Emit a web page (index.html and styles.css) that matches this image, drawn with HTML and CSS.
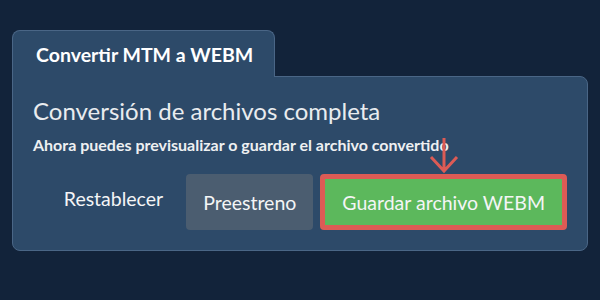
FILE: index.html
```html
<!DOCTYPE html>
<html lang="es">
<head>
    <meta charset="UTF-8">
    <meta name="viewport" content="width=device-width, initial-scale=1.0">
    <title>Convertir MTM a WEBM</title>
    <link rel="stylesheet" href="styles.css">
</head>
<body>
    <div class="converter">
        <div class="tab">Convertir MTM a WEBM</div>
        <div class="panel">
            <h2>Conversión de archivos completa</h2>
            <p class="note">Ahora puedes previsualizar o guardar el archivo convertido</p>
            <div class="actions">
                <button class="btn btn-reset">Restablecer</button>
                <button class="btn btn-preview">Preestreno</button>
                <button class="btn btn-save">
                    Guardar archivo WEBM
                    <svg class="pointer" width="30" height="36" viewBox="0 0 30 36">
                        <path d="M15 0 V33 M2 19 L15 33 L28 19" fill="none" stroke="#dc5b55" stroke-width="3"/>
                    </svg>
                </button>
            </div>
        </div>
    </div>
</body>
</html>
```

FILE: styles.css
```css
* {
    box-sizing: border-box;
}

body {
    margin: 0;
    padding: 30px 12px;
    background-color: #12233a;
    font-family: Lato, "Open Sans", sans-serif;
    color: #eef0f2;
}

.tab {
    width: 263px;
    height: 47px;
    padding: 12px 0 0 23px;
    background: #2d4a69;
    border: 1px solid #4a6686;
    border-bottom: none;
    border-radius: 8px 8px 0 0;
    font-size: 19.5px;
    font-weight: bold;
    color: #fff;
    position: relative;
    z-index: 1;
    margin-bottom: -1px;
}

.panel {
    background: #2d4a69;
    border: 1px solid #4a6686;
    border-radius: 0 8px 8px 8px;
    padding: 19px 20px 19px 20px;
    height: 175px;
}

.panel h2 {
    margin: 0;
    font-size: 24px;
    font-weight: normal;
    color: #e9ecef;
}

.note {
    margin: 10px 0 0;
    font-size: 16px;
    font-weight: bold;
    color: #eef0f2;
}

.actions {
    display: flex;
    justify-content: flex-end;
    gap: 7px;
    margin-top: 20px;
}

.btn {
    height: 56px;
    padding: 0 17px;
    border: none;
    border-radius: 4px;
    font-family: Lato, "Open Sans", sans-serif;
    font-size: 19.5px;
    color: #f4f5f6;
    background: transparent;
}

.btn-reset {
    padding-bottom: 8px;
    margin-right: -1px;
}

.btn-preview {
    background: #4b5d70;
}

.btn-save {
    position: relative;
    background: #5cb85c;
    border: 5px solid #dc5b55;
    padding: 0 17px;
}

.pointer {
    position: absolute;
    left: 50%;
    bottom: 100%;
    margin-left: -15px;
    margin-bottom: 5px;
}
```
